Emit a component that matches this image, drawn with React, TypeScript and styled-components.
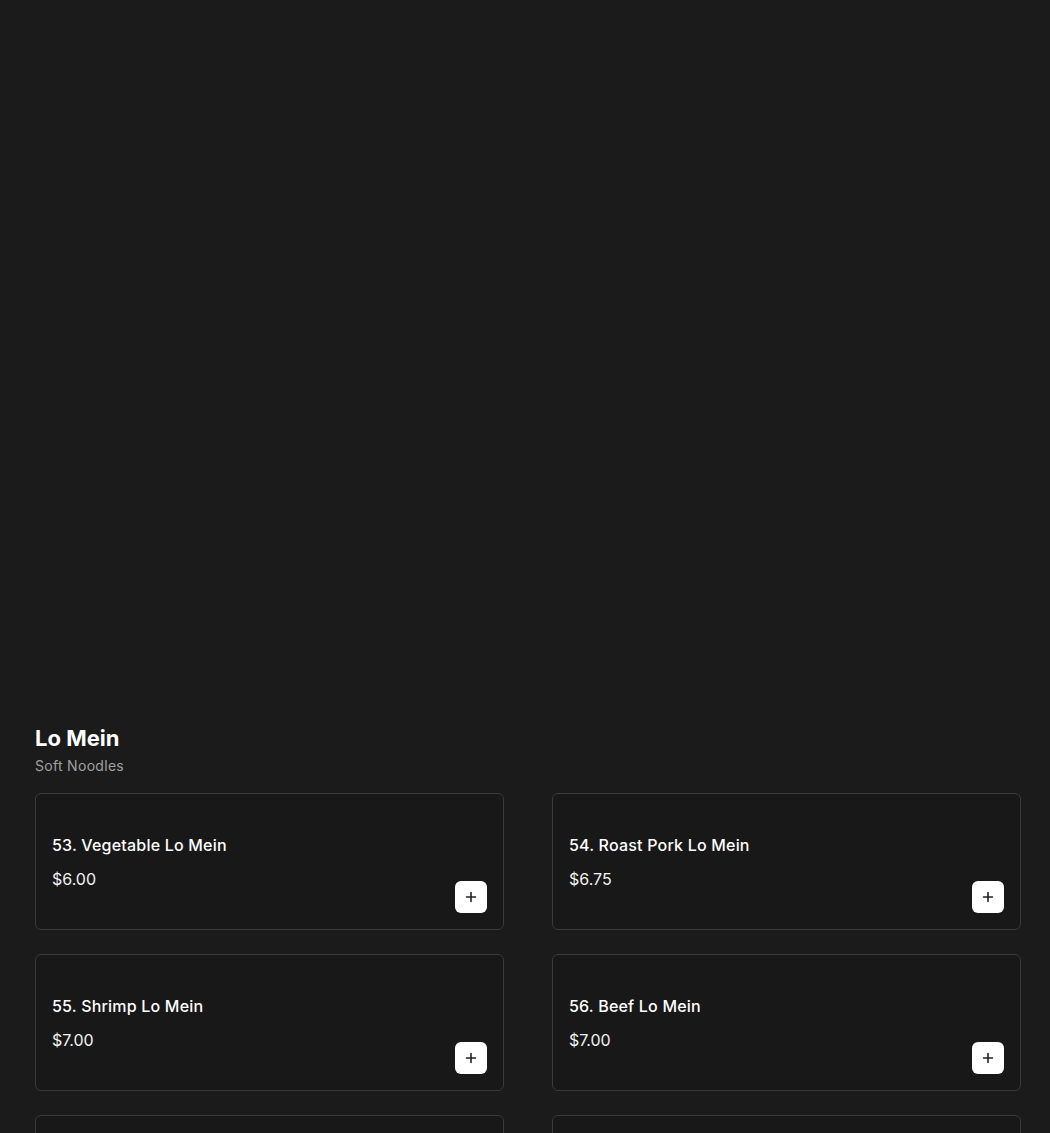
import styled, { createGlobalStyle } from 'styled-components';

const GlobalStyle = createGlobalStyle`
	body {
		margin: 0;
		background: #1b1b1b;
		font-family: Inter, "Noto Sans", sans-serif;
		color: #ffffff;
	}
`;

const items = [
	{ name: '53. Vegetable Lo Mein', price: '$6.00' },
	{ name: '54. Roast Pork Lo Mein', price: '$6.75' },
	{ name: '55. Shrimp Lo Mein', price: '$7.00' },
	{ name: '56. Beef Lo Mein', price: '$7.00' },
	{ name: '57. Chicken Lo Mein', price: '$7.00' },
	{ name: '58. House Special Lo Mein', price: '$7.50' },
];

const PlusIcon = () => (
	<svg width="12" height="12" viewBox="0 0 12 12" fill="none">
		<path d="M6 1.5v9M1.5 6h9" stroke="#222" strokeWidth="1.6" strokeLinecap="round" />
	</svg>
);

export default function App() {
	return (
		<>
			<GlobalStyle />
			<Page>
				<Hero />
				<Section>
					<Heading>Lo Mein</Heading>
					<Subheading>Soft Noodles</Subheading>
					<Grid>
						{items.map((item) => (
							<Card key={item.name}>
								<Info>
									<Name>{item.name}</Name>
									<Price>{item.price}</Price>
								</Info>
								<AddButton aria-label="Add">
									<PlusIcon />
								</AddButton>
							</Card>
						))}
					</Grid>
				</Section>
			</Page>
		</>
	);
}

const Page = styled.div`
	min-height: 100vh;
	background: #1b1b1b;
`;

const Hero = styled.div`
	height: 724px;
`;

const Section = styled.section`
	padding: 0 29px 40px 35px;
`;

const Heading = styled.h2`
	margin: 0;
	font-size: 22px;
	line-height: 28px;
	font-weight: 700;
	color: #ffffff;
`;

const Subheading = styled.div`
	margin-top: 5px;
	font-size: 14px;
	line-height: 18px;
	letter-spacing: 0.3px;
	color: #a0a0a0;
`;

const Grid = styled.div`
	display: grid;
	grid-template-columns: 1fr 1fr;
	column-gap: 48px;
	row-gap: 24px;
	margin-top: 18px;
`;

const Card = styled.div`
	display: flex;
	justify-content: space-between;
	align-items: flex-end;
	height: 137px;
	box-sizing: border-box;
	padding: 41px 16px 16px 16px;
	border: 1px solid #3a3a3a;
	border-radius: 6px;
	background: #181818;
`;

const Info = styled.div`
	display: flex;
	flex-direction: column;
	align-self: flex-start;
	gap: 14px;
`;

const Name = styled.div`
	font-size: 16px;
	line-height: 20px;
	font-weight: 500;
	letter-spacing: 0.2px;
	color: #ffffff;
`;

const Price = styled.div`
	font-size: 16px;
	line-height: 20px;
	color: #f2f2f2;
`;

const AddButton = styled.button`
	display: flex;
	align-items: center;
	justify-content: center;
	width: 32px;
	height: 32px;
	padding: 0;
	border: none;
	border-radius: 6px;
	background: #ffffff;
	cursor: pointer;
`;
